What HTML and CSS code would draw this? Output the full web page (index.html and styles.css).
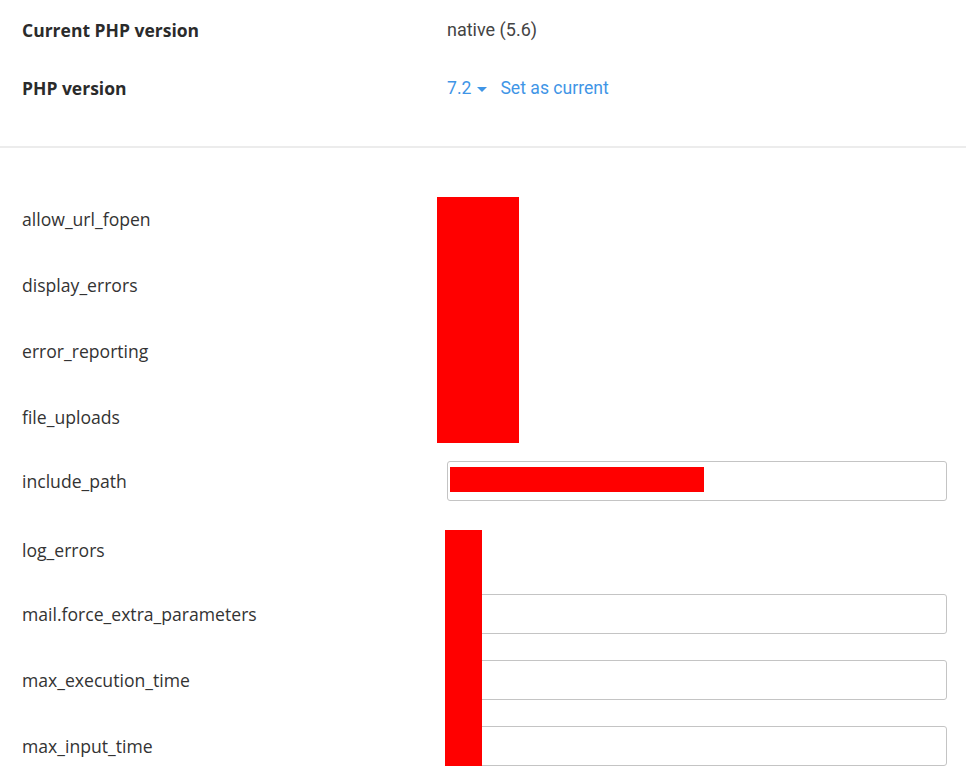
FILE: index.html
```html
<!DOCTYPE html>
<html lang="en">
<head>
<meta charset="utf-8">
<title>PHP version settings</title>
<link rel="stylesheet" href="styles.css">
</head>
<body>
<div class="page">
  <section class="summary">
    <div class="srow">
      <div class="label strong">Current PHP version</div>
      <div class="value">native (5.6)</div>
    </div>
    <div class="srow">
      <div class="label strong">PHP version</div>
      <div class="value links">
        <span class="link">7.2</span>
        <svg class="caret" width="10" height="5" viewBox="0 0 10 5"><path d="M0 0 L10 0 L5 5 Z" fill="#3f95e6"/></svg>
        <span class="link set">Set as current</span>
      </div>
    </div>
  </section>
  <div class="sep"></div>
  <section class="options">
    <div class="orow"><div class="label">allow_url_fopen</div><div class="value"></div></div>
    <div class="orow"><div class="label">display_errors</div><div class="value"></div></div>
    <div class="orow"><div class="label">error_reporting</div><div class="value"></div></div>
    <div class="orow"><div class="label">file_uploads</div><div class="value"></div></div>
    <div class="orow include"><div class="label">include_path</div><div class="value"><div class="input"><span class="mark"></span></div></div></div>
    <div class="orow log"><div class="label">log_errors</div><div class="value"></div></div>
    <div class="orow"><div class="label">mail.force_extra_parameters</div><div class="value"><div class="input"></div></div></div>
    <div class="orow"><div class="label">max_execution_time</div><div class="value"><div class="input"></div></div></div>
    <div class="orow"><div class="label">max_input_time</div><div class="value"><div class="input"></div></div></div>
  </section>
  <div class="redact r1"></div>
  <div class="redact r2"></div>
</div>
</body>
</html>
```
FILE: styles.css
```css
html, body {
  margin: 0;
  padding: 0;
  background: #ffffff;
}
.page {
  position: relative;
  width: 966px;
  min-height: 772px;
  overflow: hidden;
  font-family: "Open Sans", "Liberation Sans", sans-serif;
  color: #333333;
}
.summary {
  padding-top: 1px;
}
.srow, .orow {
  display: grid;
  grid-template-columns: 425px 1fr;
  align-items: center;
  padding: 0 19px 0 22px;
}
.srow {
  height: 58px;
}
.label {
  font-size: 17.6px;
  line-height: 24px;
  color: #333333;
}
.label.strong {
  font-weight: 700;
  font-size: 17.5px;
  color: #2b2b2b;
}
.value {
  font-family: Roboto, "Liberation Sans", sans-serif;
  font-size: 18px;
  line-height: 24px;
  color: #444444;
}
.links {
  display: flex;
  align-items: center;
  font-size: 17.6px;
}
.link {
  color: #3f95e6;
}
.caret {
  margin: 2px 0 0 6px;
}
.set {
  margin-left: 13px;
}
.sep {
  margin-top: 29px;
  height: 2px;
  background: #ececec;
}
.options {
  margin-top: 38px;
}
.orow {
  height: 66px;
}
.orow.include {
  height: 62px;
}
.orow.log {
  height: 63px;
  padding-top: 6px;
}
.input {
  box-sizing: border-box;
  height: 40px;
  border: 1px solid #c4c4c4;
  border-radius: 3px;
  padding: 5px 2px;
  background: #ffffff;
}
.mark {
  display: block;
  width: 254px;
  height: 25px;
  background: #ff0000;
}
.redact {
  position: absolute;
  background: #ff0000;
}
.r1 {
  left: 437px;
  top: 197px;
  width: 82px;
  height: 246px;
}
.r2 {
  left: 445px;
  top: 530px;
  width: 37px;
  height: 236px;
}
```
